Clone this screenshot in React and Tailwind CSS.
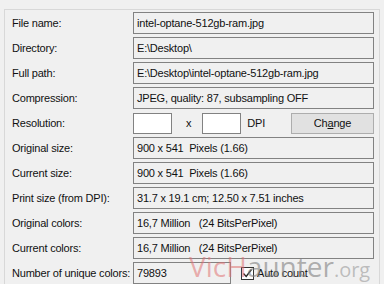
const rows = [
  ['File name:', 'intel-optane-512gb-ram.jpg'],
  ['Directory:', 'E:\\Desktop\\'],
  ['Full path:', 'E:\\Desktop\\intel-optane-512gb-ram.jpg'],
  ['Compression:', 'JPEG, quality: 87, subsampling OFF'],
  ['Resolution:', null],
  ['Original size:', '900 x 541  Pixels (1.66)'],
  ['Current size:', '900 x 541  Pixels (1.66)'],
  ['Print size (from DPI):', '31.7 x 19.1 cm; 12.50 x 7.51 inches'],
  ['Original colors:', '16,7 Million   (24 BitsPerPixel)'],
  ['Current colors:', '16,7 Million   (24 BitsPerPixel)'],
  ['Number of unique colors:', 'unique'],
]

function Field({ children, className = '' }) {
  return (
    <div className={`flex h-[22px] items-center whitespace-pre border border-[#828282] bg-[#f0f0f0] pl-[3px] ${className}`}>
      {children}
    </div>
  )
}

function ResolutionRow() {
  return (
    <div className="flex h-[22px] items-center">
      <div className="h-[21px] w-[39px] border border-[#828282] bg-white" />
      <span className="ml-[14px]">x</span>
      <div className="ml-[11px] h-[21px] w-[39px] border border-[#828282] bg-white" />
      <span className="ml-[6px]">DPI</span>
      <button className="ml-auto h-[21px] w-[83px] border border-[#adadad] bg-[#e1e1e1] text-[#111]">
        Ch<span className="underline">a</span>nge
      </button>
    </div>
  )
}

function UniqueRow() {
  return (
    <div className="flex h-[22px] items-center">
      <Field className="w-[98px]">79893</Field>
      <div className="ml-[10px] flex h-[13px] w-[13px] items-center justify-center border border-[#333] bg-white">
        <svg width="11" height="11" viewBox="0 0 11 11" fill="none">
          <path d="M1.5 5.5 L4.2 8.5 L9.5 1.5" stroke="#222" strokeWidth="1.3" />
        </svg>
      </div>
      <span className="ml-[3px] whitespace-nowrap">Auto count</span>
    </div>
  )
}

export default function App() {
  return (
    <div
      className="relative h-[284px] w-[384px] overflow-hidden bg-[#f0f0f0] pl-[4px] pt-[9px] text-[11px] tracking-[-0.2px] text-[#111]"
      style={{ fontFamily: '"Liberation Sans", Arial, sans-serif' }}
    >
      <div className="h-[300px] w-[376px] border border-[#d8d8d8] pl-[7px] pr-[5px] pt-[2px]">
        <div className="flex flex-col gap-[3px]">
          {rows.map(([label, value]) => (
            <div key={label} className="flex items-center">
              <div className="w-[121px] shrink-0 whitespace-nowrap">{label}</div>
              <div className="flex-1">
                {value === null ? (
                  <ResolutionRow />
                ) : value === 'unique' ? (
                  <UniqueRow />
                ) : (
                  <Field>{value}</Field>
                )}
              </div>
            </div>
          ))}
        </div>
      </div>

      {/* watermark */}
      <div
        className="pointer-events-none absolute left-[189px] top-[252px] flex items-baseline leading-none tracking-normal"
        style={{ fontFamily: '"Open Sans", "Liberation Sans", sans-serif' }}
      >
        <span className="text-[28px] text-[#e07070]/55">VicH</span>
        <span className="text-[28px] text-[#808080]/60">aunter</span>
        <span className="text-[20px] text-[#999]/60">.org</span>
      </div>
    </div>
  )
}
